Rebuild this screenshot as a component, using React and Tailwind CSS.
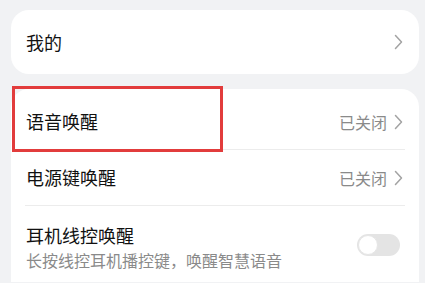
const font = { fontFamily: '"Noto Sans CJK SC", "Noto Sans", sans-serif' };

const Arrow = () => (
    <svg width="9" height="16" viewBox="0 0 9 16" className="ml-[7px]">
        <path d="M1.5 1.5 L7.5 8 L1.5 14.5" fill="none" stroke="#a3a3a3" strokeWidth="1.5" strokeLinecap="round" strokeLinejoin="round" />
    </svg>
);

const LinkRow = ({ title, value, highlight }) => (
    <div className="relative h-[55px] flex items-center justify-between pl-[15px] pr-[16px]">
        {highlight && (
            <div className="absolute left-[1px] top-[-8px] w-[211px] h-[66px] border-[3px] border-[#e23c3c]" />
        )}
        <span className="text-[18px] text-[#111111]">{title}</span>
        <div className="flex items-center">
            {value && <span className="text-[16px] text-[#8a8a8a]">{value}</span>}
            <Arrow />
        </div>
    </div>
);

export default function App() {
    return (
        <div className="w-[425px] h-[283px] bg-[#f1f2f4] overflow-hidden pt-[10px] pl-[11px] pr-[6px]" style={font}>
            <div className="bg-white rounded-[18px] h-[64px] flex items-center justify-between pl-[15px] pr-[16px]">
                <span className="text-[18px] text-[#111111]">我的</span>
                <Arrow />
            </div>

            <div className="mt-[15px] bg-white rounded-t-[18px] pt-[5px]">
                <LinkRow title="语音唤醒" value="已关闭" highlight />
                <div className="mx-[14px] h-px bg-[#ececec]" />
                <LinkRow title="电源键唤醒" value="已关闭" />
                <div className="mx-[14px] h-px bg-[#ececec]" />
                <div className="flex items-center justify-between pl-[15px] pr-[19px] pt-[16px] pb-[10px]">
                    <div className="flex flex-col">
                        <span className="text-[18px] text-[#111111] leading-[26px]">耳机线控唤醒</span>
                        <span className="text-[16px] text-[#8a8a8a] leading-[24px]">长按线控耳机播控键，唤醒智慧语音</span>
                    </div>
                    <div className="relative w-[43px] h-[22px] rounded-full bg-[#e4e4e4] mt-[-4px]">
                        <div className="absolute left-[1px] top-[1px] w-[20px] h-[20px] rounded-full bg-white border border-[#e6e6e6]" />
                    </div>
                </div>
            </div>
        </div>
    );
}
